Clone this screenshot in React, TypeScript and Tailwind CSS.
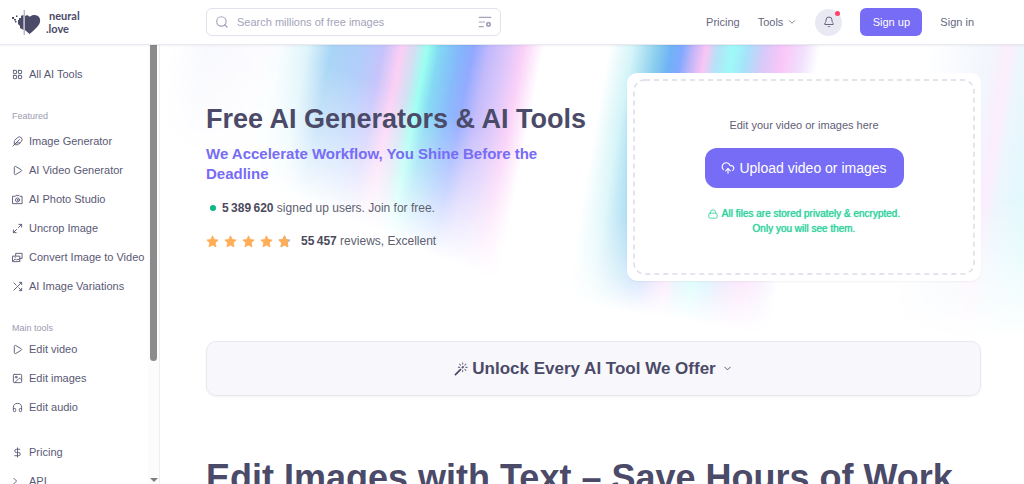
import type { ReactNode } from 'react';
import {
  Bell,
  ChevronDown,
  CloudUpload,
  DollarSign,
  Feather,
  Headphones,
  Image,
  LayoutGrid,
  Play,
  Search,
  Terminal,
} from 'lucide-react';
import { FiShuffle } from 'react-icons/fi';
import { BsMagic } from 'react-icons/bs';

type IconProps = { className?: string };

function Stroke({ className, children }: IconProps & { children: ReactNode }) {
  return (
    <svg
      viewBox="0 0 24 24"
      fill="none"
      stroke="currentColor"
      strokeWidth="2"
      strokeLinecap="round"
      strokeLinejoin="round"
      className={className}
      aria-hidden="true"
    >
      {children}
    </svg>
  );
}

function CameraIcon({ className }: IconProps) {
  return (
    <Stroke className={className}>
      <path d="M2 5h5l2-2h6l2 2h5v16H2z" />
      <circle cx="12" cy="13" r="4.5" />
      <circle cx="12" cy="13" r="1" />
    </Stroke>
  );
}

function ExpandIcon({ className }: IconProps) {
  return (
    <Stroke className={className}>
      <path d="M15 3h6v6M21 3l-7 7M9 21H3v-6M3 21l7-7" />
    </Stroke>
  );
}

function StackedImagesIcon({ className }: IconProps) {
  return (
    <Stroke className={className}>
      <path d="M8 8V3h14v11h-5" />
      <path d="M2 9h15v12H2z" />
      <path d="m3 19 4-4 3 3 3-3 4 4" />
      <path d="M7 12h.01" />
    </Stroke>
  );
}

function LockIcon({ className }: IconProps) {
  return (
    <Stroke className={className}>
      <rect x="2" y="10" width="20" height="12" rx="3" />
      <path d="M6 10V8a6 6 0 0 1 12 0v2" />
    </Stroke>
  );
}

function FilterIcon({ className }: IconProps) {
  return (
    <Stroke className={className}>
      <path d="M2 4h20M2 12h9M2 20h7" />
      <circle cx="18" cy="16" r="3" strokeWidth="3" />
    </Stroke>
  );
}

function Star({ partial = false }: { partial?: boolean }) {
  const d = 'M12 1.5l3.2 6.8 7.3 1-5.3 5.2 1.3 7.5L12 18.4 5.5 22l1.3-7.5L1.5 9.3l7.300-1z';
  return (
    <svg viewBox="0 0 24 24" className="size-[13px]" aria-hidden="true">
      <path
        d={d}
        fill={partial ? '#b9b4b8' : '#ffae57'}
        stroke={partial ? '#b9b4b8' : '#ffae57'}
        strokeWidth="1.5"
        strokeLinejoin="round"
      />
      {partial && (
        <>
          <clipPath id="star-part">
            <rect width="18" height="24" />
          </clipPath>
          <path
            d={d}
            fill="#ffae57"
            stroke="#ffae57"
            strokeWidth="1.5"
            strokeLinejoin="round"
            clipPath="url(#star-part)"
          />
        </>
      )}
    </svg>
  );
}

function LogoMark() {
  return (
    <svg viewBox="0 0 30 28" className="h-7 w-[30px]" aria-hidden="true">
      <g fill="#4b4a68">
        <path d="M13 8C14 7.400 15 7 16 7.600L17.800 8.800C20 6.800 23 6.400 25.500 7.800 28.500 9.600 29 13.500 27 16.500 25 19.500 20.500 23.500 17.500 26L13 22z" />
        <path d="M11.500 7 9 7.800 9 10H7v2H6v4l2 2v2l3.500 2z" />
        <rect x="0" y="9" width="2" height="2" />
        <rect x="2" y="11" width="2" height="1.500" />
        <rect x="4" y="7.500" width="1.500" height="1.500" />
        <rect x="3" y="13" width="1.500" height="1.500" />
      </g>
      <path d="M12.200 2v25" stroke="#9a99ac" strokeWidth="1" />
    </svg>
  );
}

function Aurora() {
  return (
    <svg
      viewBox="0 0 864 300"
      preserveAspectRatio="none"
      className="absolute inset-x-0 top-0 h-[300px] w-full"
      aria-hidden="true"
    >
      <defs>
        <linearGradient id="band-a" gradientUnits="userSpaceOnUse" x1="0" x2="400" y1="0" y2="0">
          <stop offset="0.03" stopColor="#ffffff" />
          <stop offset="0.12" stopColor="#f5f6fd" />
          <stop offset="0.25" stopColor="#fcfbff" />
          <stop offset="0.3" stopColor="#f8fdff" />
          <stop offset="0.37" stopColor="#ddf4fa" />
          <stop offset="0.43" stopColor="#a4d3f5" />
          <stop offset="0.51" stopColor="#aecbfb" />
          <stop offset="0.56" stopColor="#c3c1fb" />
          <stop offset="0.605" stopColor="#fccdf5" />
          <stop offset="0.64" stopColor="#cfdff3" />
          <stop offset="0.67" stopColor="#98fff0" />
          <stop offset="0.7" stopColor="#7fd8f3" />
          <stop offset="0.75" stopColor="#82b7fb" />
          <stop offset="0.785" stopColor="#8fa8ff" />
          <stop offset="0.825" stopColor="#c2b9fb" />
          <stop offset="0.87" stopColor="#dcc6fa" />
          <stop offset="0.91" stopColor="#fad0f8" />
          <stop offset="0.96" stopColor="#ffffff" />
        </linearGradient>
        <linearGradient id="band-b" gradientUnits="userSpaceOnUse" x1="440" x2="680" y1="0" y2="0">
          <stop offset="0.04" stopColor="#ffffff" />
          <stop offset="0.14" stopColor="#d3f4f8" />
          <stop offset="0.24" stopColor="#8bcfee" />
          <stop offset="0.3" stopColor="#70b2f6" />
          <stop offset="0.345" stopColor="#80a9ff" />
          <stop offset="0.395" stopColor="#c6b6f8" />
          <stop offset="0.445" stopColor="#fac5f4" />
          <stop offset="0.495" stopColor="#b5e2f8" />
          <stop offset="0.56" stopColor="#9dfaf8" />
          <stop offset="0.62" stopColor="#a8e2fa" />
          <stop offset="0.69" stopColor="#d8c9f9" />
          <stop offset="0.77" stopColor="#fac6f8" />
          <stop offset="0.85" stopColor="#f0e0fc" />
          <stop offset="0.92" stopColor="#ffffff" />
        </linearGradient>
        <linearGradient id="band-c" gradientUnits="userSpaceOnUse" x1="770" x2="930" y1="0" y2="0">
          <stop offset="0" stopColor="#ffffff" />
          <stop offset="0.2" stopColor="#f8fafe" />
          <stop offset="0.38" stopColor="#f2f6fd" />
          <stop offset="0.5" stopColor="#fbedfc" />
          <stop offset="0.57" stopColor="#edf5fd" />
          <stop offset="0.78" stopColor="#dcfafc" />
          <stop offset="1" stopColor="#deecfc" />
        </linearGradient>
        <linearGradient id="fade-a" gradientUnits="userSpaceOnUse" x1="46" y1="-110" x2="-34" y2="83">
          <stop offset="0" stopColor="#fff" />
          <stop offset="0.35" stopColor="#eee" />
          <stop offset="0.65" stopColor="#888" />
          <stop offset="1" stopColor="#000" />
        </linearGradient>
        <linearGradient id="fade-b" gradientUnits="userSpaceOnUse" x1="0" y1="0" x2="-31" y2="182">
          <stop offset="0" stopColor="#fff" />
          <stop offset="0.5" stopColor="#aaa" />
          <stop offset="0.82" stopColor="#444" />
          <stop offset="1" stopColor="#000" />
        </linearGradient>
        <linearGradient id="fade-c" gradientUnits="userSpaceOnUse" x1="0" y1="150" x2="0" y2="295">
          <stop offset="0" stopColor="#fff" />
          <stop offset="1" stopColor="#000" />
        </linearGradient>
        <mask id="mask-a" maskUnits="userSpaceOnUse" x="0" y="0" width="864" height="300">
          <rect width="864" height="300" fill="url(#fade-a)" />
        </mask>
        <mask id="mask-b" maskUnits="userSpaceOnUse" x="0" y="0" width="864" height="300">
          <rect width="864" height="300" fill="url(#fade-b)" />
        </mask>
        <mask id="mask-c" maskUnits="userSpaceOnUse" x="0" y="0" width="864" height="300">
          <rect width="864" height="300" fill="url(#fade-c)" />
        </mask>
      </defs>
      <g mask="url(#mask-a)">
        <rect width="400" height="300" fill="url(#band-a)" transform="skewX(-11)" />
      </g>
      <g mask="url(#mask-b)">
        <rect x="440" width="240" height="300" fill="url(#band-b)" transform="skewX(-10)" />
      </g>
      <g mask="url(#mask-c)">
        <rect x="770" width="200" height="300" fill="url(#band-c)" transform="skewX(-9)" />
      </g>
    </svg>
  );
}

const iconClass = 'size-[11px] shrink-0';

const featured = [
  { label: 'Image Generator', icon: <Feather className={iconClass} /> },
  { label: 'AI Video Generator', icon: <Play className={iconClass} /> },
  { label: 'AI Photo Studio', icon: <CameraIcon className={iconClass} /> },
  { label: 'Uncrop Image', icon: <ExpandIcon className={iconClass} /> },
  { label: 'Convert Image to Video', icon: <StackedImagesIcon className={iconClass} /> },
  { label: 'AI Image Variations', icon: <FiShuffle className={iconClass} /> },
];

const mainTools = [
  { label: 'Edit video', icon: <Play className={iconClass} /> },
  { label: 'Edit images', icon: <Image className={iconClass} /> },
  { label: 'Edit audio', icon: <Headphones className={iconClass} /> },
];

const more = [
  { label: 'Pricing', icon: <DollarSign className={iconClass} /> },
  { label: 'API', icon: <Terminal className={iconClass} /> },
];

function NavList({ items }: { items: { label: string; icon: ReactNode }[] }) {
  return (
    <ul>
      {items.map((item) => (
        <li key={item.label}>
          <a href="#" className="flex h-[29px] items-center gap-1.5 whitespace-nowrap">
            {item.icon}
            {item.label}
          </a>
        </li>
      ))}
    </ul>
  );
}

function Header() {
  return (
    <header className="z-10 flex h-[45px] shrink-0 items-center border-b border-[#e8e8f1] bg-white pr-[50px] pl-3 text-[11px] text-[#67667f] shadow-xs">
      <a href="#" className="flex w-[194px] shrink-0 items-center gap-1 text-[#4b4a68]">
        <LogoMark />
        <span className="font-[Lato,sans-serif] text-[11px] leading-[13px] font-bold">
          <span className="block pl-[3px]">neural</span>
          <span className="block">.love</span>
        </span>
      </a>
      <form className="flex h-7 w-[295px] items-center gap-2 rounded-md border border-[#e2e1ec] px-2 text-[#a4a3ba]">
        <Search className="size-[14px] shrink-0" />
        <input
          type="search"
          aria-label="Search"
          placeholder="Search millions of free images"
          className="min-w-0 flex-1 bg-transparent outline-none placeholder:text-[#a4a3ba]"
        />
        <button type="button" aria-label="Search settings">
          <FilterIcon className="size-[14px]" />
        </button>
      </form>
      <nav className="ml-auto flex items-center gap-[18px]">
        <a href="#">Pricing</a>
        <button type="button" className="flex items-center gap-1">
          Tools
          <ChevronDown className="size-[10px]" />
        </button>
        <button
          type="button"
          aria-label="Notifications"
          className="relative flex size-[27px] items-center justify-center rounded-full bg-[#e9e9f3]"
        >
          <Bell className="size-3" />
          <span className="absolute top-0.5 right-0.5 size-[5px] rounded-full bg-[#ff4468]" />
        </button>
        <button type="button" className="h-7 w-[62px] rounded-md bg-[#776cf5] text-white">
          Sign up
        </button>
        <a href="#">Sign in</a>
      </nav>
    </header>
  );
}

function Sidebar() {
  return (
    <aside className="flex w-40 shrink-0 overflow-hidden border-r border-[#ededf4] text-[11px] text-[#5a5975]">
      <nav className="flex-1 pt-[15px] pl-3">
        <a href="#" className="flex h-[29px] items-center gap-1.5">
          <LayoutGrid className={iconClass} />
          All AI Tools
        </a>
        <h2 className="mt-5 flex h-3 text-[9px] leading-[14px] text-[#9c9bb2]">Featured</h2>
        <div className="mt-1.5">
          <NavList items={featured} />
        </div>
        <h2 className="mt-5 flex h-3 text-[9px] leading-[14px] text-[#9c9bb2]">Main tools</h2>
        <div className="mt-0.5">
          <NavList items={mainTools} />
        </div>
        <div className="mt-4">
          <NavList items={more} />
        </div>
      </nav>
      <div className="flex w-[11px] flex-col items-center justify-between bg-[#fcfcfc] pb-0.5" aria-hidden="true">
        <span className="h-[316px] w-[7px] rounded-b-full bg-[#8b8b8b]" />
        <svg viewBox="0 0 8 4" className="h-1 w-2">
          <path d="M0 0h8L4 4z" fill="#7d7d7d" />
        </svg>
      </div>
    </aside>
  );
}

function UploadCard() {
  return (
    <section className="w-[354px] shrink-0 rounded-[10px] bg-white p-[7px] shadow-xs">
      <div className="relative flex h-[194px] flex-col items-center pt-[37px]">
        <svg className="absolute inset-0 size-full overflow-visible" aria-hidden="true">
          <rect
            width="100%"
            height="100%"
            rx="11"
            fill="none"
            stroke="#dcdbe8"
            strokeWidth="1.5"
            strokeDasharray="5 4"
          />
        </svg>
        <p className="text-[11px] leading-4 text-[#5f5e76]">Edit your video or images here</p>
        <button
          type="button"
          className="relative mt-[15px] flex h-10 w-[199px] items-center justify-center gap-1 rounded-xl bg-[#776cf5] text-sm whitespace-nowrap text-white"
        >
          <CloudUpload className="size-[14px]" />
          Upload video or images
        </button>
        <p className="mt-[18px] text-center text-[10px] leading-[15px] text-[#2fd09c] [text-shadow:0_0_1px_#2fd09c]">
          <LockIcon className="mr-1 inline size-[10px]" />
          All files are stored privately &amp; encrypted.
          <br />
          Only you will see them.
        </p>
      </div>
    </section>
  );
}

export default function App() {
  return (
    <div className="flex h-screen flex-col overflow-hidden bg-white font-['Liberation_Sans',Arial,sans-serif]">
      <Header />
      <div className="flex min-h-0 flex-1">
        <Sidebar />
        <main className="relative min-w-0 flex-1 overflow-hidden pr-[43px] pl-[46px] text-[#4b4a68]">
          <Aurora />
          <div className="relative">
            <div className="flex justify-between pt-7">
              <div className="pt-[30px]">
                <h1 className="text-[27px] leading-8 font-bold whitespace-nowrap">Free AI Generators &amp; AI Tools</h1>
                <p className="mt-[9px] max-w-[370px] text-[15px] leading-5 font-bold text-[#776cf5]">
                  We Accelerate Workflow, You Shine Before the Deadline
                </p>
                <p className="mt-4 flex items-center gap-1.5 pl-1 text-xs text-[#605f70]">
                  <span className="size-1.5 rounded-full bg-[#08b880]" />
                  <span>
                    <strong className="text-[#4b4a5c]">5&#8201;389&#8201;620</strong> signed up users. Join for free.
                  </span>
                </p>
                <div className="mt-[17px] flex items-center gap-2.5 text-xs text-[#605f70]">
                  <span className="flex gap-[5px]" role="img" aria-label="Rating">
                    <Star />
                    <Star />
                    <Star />
                    <Star />
                    <Star partial />
                  </span>
                  <span>
                    <strong className="text-[#4b4a5c]">55&#8201;457</strong> reviews, Excellent
                  </span>
                </div>
              </div>
              <UploadCard />
            </div>
            <button
              type="button"
              className="mt-[60px] flex h-[55px] w-full items-center justify-center gap-1 rounded-[10px] border border-[#e8e8f0] bg-[#f8f8fc] text-[17px] font-bold shadow-xs"
            >
              <BsMagic className="size-[14px]" />
              Unlock Every AI Tool We Offer
              <ChevronDown className="ml-0.5 size-[11px]" />
            </button>
            <h2 className="mt-[60px] text-4xl leading-[44px] font-bold whitespace-nowrap">
              Edit Images with Text – Save Hours of Work
            </h2>
          </div>
        </main>
      </div>
    </div>
  );
}
